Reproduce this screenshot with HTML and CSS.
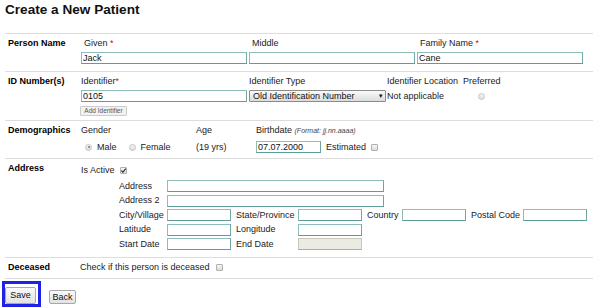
FILE: index.html
```html
<!DOCTYPE html>
<html lang="en">
<head>
  <meta charset="UTF-8">
  <meta name="viewport" content="width=device-width, initial-scale=1.0">
  <title>Create a New Patient</title>
  <link rel="stylesheet" href="styles.css">
</head>
<body>
  <div class="page">
    <h2>Create a New Patient</h2>

    <!-- Person name -->
    <div class="section sec-name">
      <div class="section-label">Person Name</div>
      <div class="name-grid">
        <div class="field">
          <label class="indent">Given <span class="req">*</span></label>
          <input type="text" class="text w-name" value="Jack">
        </div>
        <div class="field">
          <label class="indent">Middle</label>
          <input type="text" class="text w-name" value="">
        </div>
        <div class="field">
          <label class="indent">Family Name <span class="req">*</span></label>
          <input type="text" class="text w-name" value="Cane">
        </div>
      </div>
    </div>

    <!-- Identifiers -->
    <div class="section sec-id">
      <div class="section-label">ID Number(s)</div>
      <div>
        <div class="id-grid">
          <div class="field">
            <label>Identifier<span class="req">*</span></label>
            <input type="text" class="text w-name" value="0105">
          </div>
          <div class="field">
            <label>Identifier Type</label>
            <div class="select">Old Identification Number<span class="arrow">&#9662;</span></div>
          </div>
          <div class="field">
            <label>Identifier Location</label>
            <div class="plain">Not applicable</div>
          </div>
          <div class="field">
            <label>Preferred</label>
            <div class="plain"><span class="radio pref"></span></div>
          </div>
        </div>
        <button class="small-btn">Add Identifier</button>
      </div>
    </div>

    <!-- Demographics -->
    <div class="section sec-demo">
      <div class="section-label">Demographics</div>
      <div class="demo-grid">
        <div class="field">
          <label>Gender</label>
          <div class="inline-row">
            <span class="radio checked"></span><span class="opt">Male</span>
            <span class="radio"></span><span class="opt">Female</span>
          </div>
        </div>
        <div class="field">
          <label>Age</label>
          <div class="inline-row">(19 yrs)</div>
        </div>
        <div class="field">
          <label>Birthdate <span class="hint">(Format: jj.nn.aaaa)</span></label>
          <div class="inline-row">
            <input type="text" class="text w-date" value="07.07.2000">
            <span class="est">Estimated</span><span class="check"></span>
          </div>
        </div>
      </div>
    </div>

    <!-- Address -->
    <div class="section sec-addr">
      <div class="section-label">Address</div>
      <div class="addr">
        <div class="active-row">Is Active <span class="check checked"><svg viewBox="0 0 7 7" width="7" height="7"><path d="M1.3 3.6 L2.9 5.2 L5.8 1.6" fill="none" stroke="#333" stroke-width="1.2"/></svg></span></div>
        <div class="addr-rows">
          <div class="addr-row">
            <span class="lbl l1">Address</span>
            <input type="text" class="text w-addr">
          </div>
          <div class="addr-row">
            <span class="lbl l1">Address 2</span>
            <input type="text" class="text w-addr">
          </div>
          <div class="addr-row">
            <span class="lbl l1">City/Village</span>
            <input type="text" class="text w-small">
            <span class="lbl l2">State/Province</span>
            <input type="text" class="text w-small">
            <span class="lbl l3">Country</span>
            <input type="text" class="text w-small">
            <span class="lbl l4">Postal Code</span>
            <input type="text" class="text w-small">
          </div>
          <div class="addr-row">
            <span class="lbl l1">Latitude</span>
            <input type="text" class="text w-small">
            <span class="lbl l2">Longitude</span>
            <input type="text" class="text w-small">
          </div>
          <div class="addr-row">
            <span class="lbl l1">Start Date</span>
            <input type="text" class="text w-small">
            <span class="lbl l2">End Date</span>
            <input type="text" class="text w-small" disabled>
          </div>
        </div>
      </div>
    </div>

    <!-- Deceased -->
    <div class="section sec-dead">
      <div class="section-label">Deceased</div>
      <div class="dead-row">Check if this person is deceased <span class="check"></span></div>
    </div>

    <div class="actions">
      <span class="focus-ring"><button class="btn btn-save">Save</button></span>
      <button class="btn btn-back">Back</button>
    </div>
  </div>
</body>
</html>
```

FILE: styles.css
```css
body {
  margin: 0;
  padding: 0;
  background-color: #fff;
  font-family: "Liberation Sans", Arial, sans-serif;
  font-size: 9px;
  line-height: 11px;
  color: #222;
}
.page {
  width: 588px;
  margin-left: 5px;
  padding-top: 1px;
}
h2 {
  margin: 0 0 15px 0;
  font-size: 13.6px;
  line-height: 17px;
  font-weight: bold;
  color: #111;
}
.section {
  display: grid;
  grid-template-columns: 76px 1fr;
  border-top: 1px solid #ddd;
  padding-top: 4px;
}
.section-label {
  padding-left: 3px;
  font-weight: bold;
  color: #000;
}
.sec-name { padding-bottom: 7px; }
.sec-id { padding-bottom: 4px; }
.sec-demo { padding-bottom: 5px; }
.sec-addr { padding-bottom: 6.5px; }
.sec-dead {
  padding-bottom: 5px;
  border-bottom: 1px solid #ddd;
}
.field label {
  display: block;
  height: 11px;
  white-space: nowrap;
}
.field label.indent {
  padding-left: 3px;
}
.req {
  color: #e00;
}
.text {
  display: block;
  box-sizing: border-box;
  height: 12px;
  margin: 3px 0 0 0;
  padding: 0 1px;
  border: 1px solid #8fbdba;
  border-bottom-color: #5e9c99;
  border-right-color: #6fa6a3;
  font-family: "Liberation Sans", Arial, sans-serif;
  font-size: 9px;
  color: #111;
  background-color: #fff;
}
.text:disabled {
  background-color: #ebebe4;
  border-color: #c8c8c0;
  border-bottom-color: #aaa;
}
.w-name { width: 166px; }
.w-date { width: 65px; }
.w-addr { width: 217px; }
.w-small { width: 64px; }

/* Person name */
.name-grid {
  display: grid;
  grid-template-columns: 168px 168px 168px;
}

/* Identifiers */
.id-grid {
  display: grid;
  grid-template-columns: 168px 138px 76px 40px;
}
.select {
  box-sizing: border-box;
  position: relative;
  width: 137px;
  height: 12px;
  margin-top: 3px;
  padding-left: 3px;
  border: 1px solid #8a8a8a;
  border-radius: 1px;
  background: linear-gradient(#fafafa, #dcdcdc);
  font-size: 9px;
  line-height: 10px;
  color: #111;
}
.select .arrow {
  position: absolute;
  right: 2px;
  top: 0;
  font-size: 7px;
}
.plain {
  margin-top: 4px;
  height: 11px;
}
.radio.pref {
  margin-left: 15px;
  margin-top: 2px;
}
.small-btn {
  display: block;
  box-sizing: border-box;
  width: 47px;
  height: 10px;
  margin: 4px 0 0 -1px;
  padding: 0;
  border: 1px solid #ccc;
  border-radius: 1px;
  background-color: #f2f2f2;
  font-family: "Liberation Sans", Arial, sans-serif;
  font-size: 6.5px;
  line-height: 8px;
  color: #555;
}

/* Demographics */
.demo-grid {
  display: grid;
  grid-template-columns: 115px 60px 1fr;
}
.inline-row {
  display: flex;
  align-items: center;
  height: 12px;
  margin-top: 5px;
}
.inline-row .text {
  margin-top: 0;
}
.opt {
  margin: 0 8px 0 5px;
}
.hint {
  font-size: 7px;
  font-style: italic;
  color: #444;
}
.est {
  margin: 0 5px 0 5px;
}
.radio {
  display: inline-block;
  box-sizing: border-box;
  width: 7px;
  height: 7px;
  margin-left: 4px;
  border: 1px solid #c4c4c4;
  border-radius: 50%;
  background: linear-gradient(#f4f4f4, #dedede);
  position: relative;
}
.radio.checked::after {
  content: "";
  position: absolute;
  left: 1.5px;
  top: 1.5px;
  width: 2px;
  height: 2px;
  border-radius: 50%;
  background-color: #777;
}
.check {
  display: inline-block;
  box-sizing: border-box;
  width: 7px;
  height: 7px;
  border: 1px solid #b0b0b0;
  border-radius: 1px;
  background: linear-gradient(#f6f6f6, #dcdcdc);
  vertical-align: -1px;
}
.check svg {
  display: block;
  margin: -1px 0 0 -1px;
}

/* Address */
.addr {
  padding-top: 2px;
}
.active-row {
  height: 11px;
}
.active-row .check {
  margin-left: 3px;
}
.addr-rows {
  display: flex;
  flex-direction: column;
  gap: 2.6px;
  margin-top: 4px;
  margin-left: 38px;
}
.addr-row {
  display: flex;
  align-items: center;
  height: 12px;
  white-space: nowrap;
}
.addr-row .text {
  margin-top: 0;
}
.lbl { display: inline-block; }
.l1 { width: 48px; }
.l2 { width: 62px; margin-left: 5px; }
.l3 { width: 35px; margin-left: 5px; }
.l4 { width: 52px; margin-left: 5px; }

/* Deceased */
.dead-row {
  margin-left: -1px;
}
.dead-row .check {
  margin-left: 4px;
}

/* Buttons */
.actions {
  display: flex;
  align-items: flex-end;
  margin-top: 2px;
}
.focus-ring {
  display: inline-block;
  margin-left: -3px;
  padding: 3px 2px 0 0;
  border: 3px solid #1e22e6;
}
.btn {
  display: block;
  box-sizing: border-box;
  padding: 0;
  border: 1px solid #a8a8a8;
  border-radius: 2px;
  background: linear-gradient(#fafafa, #e2e2e2);
  font-family: "Liberation Sans", Arial, sans-serif;
  font-size: 9px;
  color: #111;
}
.btn-save {
  width: 31px;
  height: 17px;
}
.btn-back {
  width: 27px;
  height: 14px;
  margin: 0 0 3px 8px;
}
```
